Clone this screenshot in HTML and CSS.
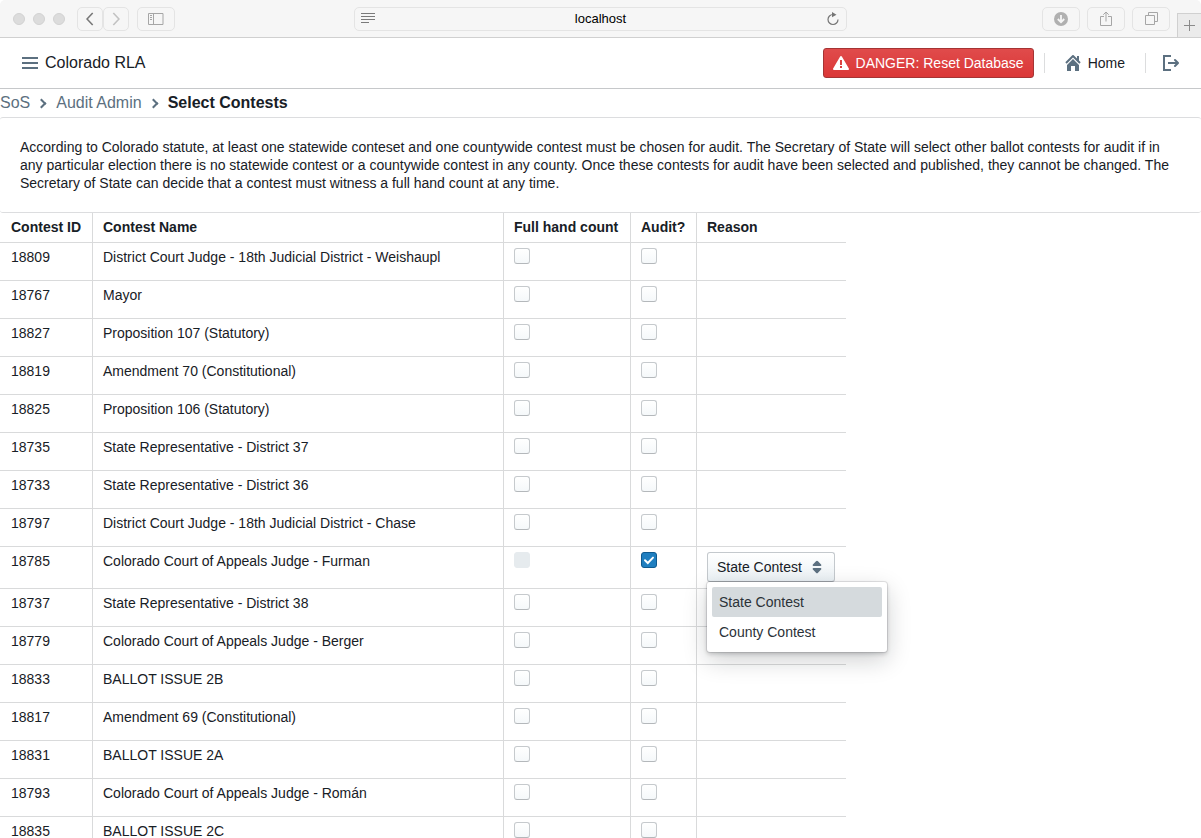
FILE: index.html
```html
<!DOCTYPE html>
<html lang="en">
<head>
<meta charset="utf-8">
<title>Colorado RLA</title>
<link rel="stylesheet" href="styles.css">
</head>
<body>
<div class="window">
  <header class="toolbar">
    <div class="toolbar-side">
      <div class="lights"><span class="light"></span><span class="light"></span><span class="light"></span></div>
      <div class="nav-pair">
        <button class="tool nav-tool" aria-label="Back"><svg width="8" height="14" viewBox="0 0 8 14"><path d="M6.700 1 1 7l5.700 6" fill="none" stroke="#777" stroke-width="1.600"/></svg></button>
        <button class="tool nav-tool" aria-label="Forward"><svg width="8" height="14" viewBox="0 0 8 14"><path d="M1.300 1 7 7l-5.700 6" fill="none" stroke="#c2c2c2" stroke-width="1.600"/></svg></button>
      </div>
      <button class="tool" aria-label="Show sidebar"><svg width="16" height="12" viewBox="0 0 16 12"><path d="M.5.500h14.500v11H.5zM5.500.500v11M2 2.500h2M2 4.500h2M2 6.500h2" fill="none" stroke="#a6a6a6"/></svg></button>
    </div>
    <div class="address">
      <svg width="14" height="11" viewBox="0 0 14 11"><path d="M0 .5h14M0 3.500h14M0 6.500h14M0 9.500h8" stroke="#7a7a7a"/></svg>
      <input class="address-input" type="text" value="localhost" aria-label="Address">
      <button class="reload" aria-label="Reload"><svg width="14" height="14" viewBox="0 0 14 14"><path d="M7 2.500A5 5 0 1 0 12 7.500" fill="none" stroke="#757575" stroke-width="1.200"/><path d="M6 0l4.500 2.700L6 5.200z" fill="#757575"/></svg></button>
    </div>
    <div class="toolbar-side toolbar-right">
      <button class="tool" aria-label="Downloads"><svg width="14" height="14" viewBox="0 0 14 14"><circle cx="7" cy="7" r="7" fill="#b0b0b0"/><path d="M7 3v7M3.800 7 7 10.300 10.200 7" fill="none" stroke="#f6f6f6" stroke-width="1.800"/></svg></button>
      <button class="tool" aria-label="Share"><svg width="12" height="16" viewBox="0 0 12 16"><path d="M4 5.500H.5v9h11v-9H8M6 10.500V1M3.300 3.700 6 1l2.700 2.700" fill="none" stroke="#a6a6a6"/></svg></button>
      <button class="tool" aria-label="Show all tabs"><svg width="13" height="13" viewBox="0 0 13 13"><path d="M.5 3.500h9v9h-9zM3.500 3.500v-3h9v9h-3" fill="none" stroke="#a6a6a6"/></svg></button>
      <button class="new-tab" aria-label="New tab"><svg width="11" height="11" viewBox="0 0 11 11"><path d="M5.500 0v11M0 5.500h11" stroke="#8a8a8a"/></svg></button>
    </div>
  </header>

  <div class="page">
    <nav class="navbar">
      <button class="brand"><svg width="16" height="16" viewBox="0 0 16 16"><path d="M0 3h16M0 8h16M0 13h16" stroke="#5c7080" stroke-width="2"/></svg>Colorado RLA</button>
      <div class="nav-actions">
        <button class="danger"><svg width="16" height="16" viewBox="0 0 16 16"><path fill="#fff" d="M15.840 13.500l.010-.010-7-12-.010.010c-.170-.300-.480-.500-.850-.500s-.670.200-.850.500l-.010-.010-7 12 .010.010c-.090.150-.150.310-.150.500 0 .550.450 1 1 1h14c.550 0 1-.450 1-1 0-.190-.060-.350-.150-.500zm-6.850-.510h-2v-2h2v2zm0-3h-2v-5h2v5z"/></svg>DANGER: Reset Database</button>
        <span class="divider"></span>
        <a class="nav-link" href="#"><svg width="16" height="16" viewBox="0 0 16 16"><path fill="#5c7080" d="M2 10v6h4v-5h4v5h4v-6L8 4zM15.700 7.300 14 5.600V1h-2v2.600L8.700.3a1 1 0 0 0-1.400 0l-7 7 1.400 1.400L8 2.400l6.300 6.300z"/></svg>Home</a>
        <span class="divider"></span>
        <button class="logout" aria-label="Log out"><svg width="16" height="16" viewBox="0 0 16 16"><path fill="#5c7080" d="M8 14H2V2h6V0H0v16h8zM15.710 7.290l-3-3a1 1 0 0 0-1.420 1.420L12.590 7H5v2h7.590l-1.300 1.290a1 1 0 0 0 1.420 1.420l3-3a1 1 0 0 0 0-1.420z"/></svg></button>
      </div>
    </nav>

    <ol class="crumbs">
      <li><a href="#">SoS</a></li>
      <li><a href="#">Audit Admin</a></li>
      <li class="current">Select Contests</li>
    </ol>

    <section class="card">According to Colorado statute, at least one statewide conteset and one countywide contest must be chosen for audit. The Secretary of State will select other ballot contests for audit if in any particular election there is no statewide contest or a countywide contest in any county. Once these contests for audit have been selected and published, they cannot be changed. The Secretary of State can decide that a contest must witness a full hand count at any time.</section>

    <table class="contests">
      <thead>
        <tr><th class="col-id">Contest ID</th><th class="col-name">Contest Name</th><th class="col-count">Full hand count</th><th class="col-audit">Audit?</th><th class="col-reason">Reason</th></tr>
      </thead>
      <tbody>
        <tr><td>18809</td><td>District Court Judge - 18th Judicial District - Weishaupl</td><td><input type="checkbox" aria-label="Full hand count 18809"></td><td><input type="checkbox" aria-label="Audit 18809"></td><td></td></tr>
        <tr><td>18767</td><td>Mayor</td><td><input type="checkbox" aria-label="Full hand count 18767"></td><td><input type="checkbox" aria-label="Audit 18767"></td><td></td></tr>
        <tr><td>18827</td><td>Proposition 107 (Statutory)</td><td><input type="checkbox" aria-label="Full hand count 18827"></td><td><input type="checkbox" aria-label="Audit 18827"></td><td></td></tr>
        <tr><td>18819</td><td>Amendment 70 (Constitutional)</td><td><input type="checkbox" aria-label="Full hand count 18819"></td><td><input type="checkbox" aria-label="Audit 18819"></td><td></td></tr>
        <tr><td>18825</td><td>Proposition 106 (Statutory)</td><td><input type="checkbox" aria-label="Full hand count 18825"></td><td><input type="checkbox" aria-label="Audit 18825"></td><td></td></tr>
        <tr><td>18735</td><td>State Representative - District 37</td><td><input type="checkbox" aria-label="Full hand count 18735"></td><td><input type="checkbox" aria-label="Audit 18735"></td><td></td></tr>
        <tr><td>18733</td><td>State Representative - District 36</td><td><input type="checkbox" aria-label="Full hand count 18733"></td><td><input type="checkbox" aria-label="Audit 18733"></td><td></td></tr>
        <tr><td>18797</td><td>District Court Judge - 18th Judicial District - Chase</td><td><input type="checkbox" aria-label="Full hand count 18797"></td><td><input type="checkbox" aria-label="Audit 18797"></td><td></td></tr>
        <tr><td>18785</td><td>Colorado Court of Appeals Judge - Furman</td><td><input type="checkbox" aria-label="Full hand count 18785" disabled></td><td><input type="checkbox" aria-label="Audit 18785" checked></td><td>
          <div class="reason">
            <select class="reason-select" aria-label="Reason 18785"><option selected>State Contest</option><option>County Contest</option></select>
            <svg class="caret" width="16" height="16" viewBox="0 0 16 16"><path fill="#5c7080" d="M4.500 7h7a.8.8 0 0 0 .6-1.400L9 2.300a1.400 1.400 0 0 0-2 0L3.900 5.600A.8.8 0 0 0 4.500 7zm7 2h-7a.8.8 0 0 0-.6 1.400L7 13.700a1.400 1.400 0 0 0 2 0l3.100-3.300A.8.8 0 0 0 11.500 9z"/></svg>
            <div class="menu">
              <button class="menu-item active">State Contest</button>
              <button class="menu-item">County Contest</button>
            </div>
          </div></td></tr>
        <tr><td>18737</td><td>State Representative - District 38</td><td><input type="checkbox" aria-label="Full hand count 18737"></td><td><input type="checkbox" aria-label="Audit 18737"></td><td></td></tr>
        <tr><td>18779</td><td>Colorado Court of Appeals Judge - Berger</td><td><input type="checkbox" aria-label="Full hand count 18779"></td><td><input type="checkbox" aria-label="Audit 18779"></td><td></td></tr>
        <tr><td>18833</td><td>BALLOT ISSUE 2B</td><td><input type="checkbox" aria-label="Full hand count 18833"></td><td><input type="checkbox" aria-label="Audit 18833"></td><td></td></tr>
        <tr><td>18817</td><td>Amendment 69 (Constitutional)</td><td><input type="checkbox" aria-label="Full hand count 18817"></td><td><input type="checkbox" aria-label="Audit 18817"></td><td></td></tr>
        <tr><td>18831</td><td>BALLOT ISSUE 2A</td><td><input type="checkbox" aria-label="Full hand count 18831"></td><td><input type="checkbox" aria-label="Audit 18831"></td><td></td></tr>
        <tr><td>18793</td><td>Colorado Court of Appeals Judge - Román</td><td><input type="checkbox" aria-label="Full hand count 18793"></td><td><input type="checkbox" aria-label="Audit 18793"></td><td></td></tr>
        <tr><td>18835</td><td>BALLOT ISSUE 2C</td><td><input type="checkbox" aria-label="Full hand count 18835"></td><td><input type="checkbox" aria-label="Audit 18835"></td><td></td></tr>
      </tbody>
    </table>
  </div>
</div>
</body>
</html>
```

FILE: styles.css
```css
*, *::before { box-sizing: border-box; }

body {
  margin: 0;
  background: #fff;
  color: #182026;
  font: 14px/18px "Liberation Sans", Arial, sans-serif;
}

button, input, select { font: inherit; color: inherit; margin: 0; }
button { border: 0; padding: 0; background: none; }
a { text-decoration: none; color: inherit; }
svg { display: block; flex: none; }

.window { display: flex; flex-direction: column; height: 100vh; overflow: hidden; }

/* Browser toolbar */
.toolbar {
  display: flex;
  align-items: center;
  flex: none;
  height: 38px;
  background: #f6f6f6;
  border-bottom: 1px solid #d0d0d0;
  border-radius: 5px 5px 0 0;
}
.toolbar-side { display: flex; align-items: center; flex: 1; gap: 8px; height: 100%; }
.toolbar-right { justify-content: flex-end; gap: 7px; }
.lights { display: flex; gap: 8px; padding: 0 4px 0 13px; }
.light { width: 12px; height: 12px; border-radius: 50%; background: #dcdcdc; border: 1px solid #d2d2d2; }
.nav-pair { display: flex; }
.tool {
  display: flex;
  align-items: center;
  justify-content: center;
  width: 38px;
  height: 24px;
  border: 1px solid #e4e4e4;
  border-radius: 5px;
}
.nav-tool { width: 26px; }
.address {
  display: flex;
  align-items: center;
  width: 41%;
  height: 24px;
  padding: 0 6px;
  border: 1px solid #e4e4e4;
  border-radius: 5px;
}
.address-input {
  flex: 1;
  min-width: 0;
  border: 0;
  padding: 0;
  background: none;
  color: #000;
  font-size: 13px;
  text-align: center;
}
.new-tab {
  display: flex;
  align-items: center;
  justify-content: center;
  align-self: flex-end;
  width: 24px;
  height: 24px;
  background: #ebebeb;
  border: 1px solid #d0d0d0;
  border-width: 1px 0 0 1px;
}

/* Application bar */
.page { flex: 1; min-height: 0; overflow: hidden; }
.navbar {
  display: flex;
  align-items: center;
  justify-content: space-between;
  height: 51px;
  padding: 0 22px;
  border-bottom: 1px solid #c6c8ca;
}
.brand { display: flex; align-items: center; gap: 7px; font-size: 16px; }
.nav-actions { display: flex; align-items: center; gap: 10px; }
.danger {
  display: flex;
  align-items: center;
  gap: 7px;
  height: 30px;
  padding: 0 9px;
  color: #fff;
  background: linear-gradient(#e04b4b, #db3737);
  border: 1px solid #a53434;
  border-radius: 3px;
}
.divider { width: 1px; height: 20px; background: #dcddde; }
.nav-link { display: flex; align-items: center; gap: 7px; padding: 0 10px; }
.logout { padding: 0 0 0 7px; }

/* Breadcrumbs */
.crumbs {
  display: flex;
  align-items: center;
  height: 28px;
  margin: 0;
  padding: 0;
  list-style: none;
  font-size: 16px;
}
.crumbs li { display: flex; align-items: center; color: #5c7080; }
.crumbs li + li::before {
  content: "";
  width: 7px;
  height: 7px;
  margin: 0 11px 0 8px;
  border: 2px solid #5c7080;
  border-width: 2px 2px 0 0;
  transform: rotate(45deg);
}
.crumbs .current { color: #182026; font-weight: 700; }

.card { padding: 20px; border: 1px solid #dcdddf; border-width: 1px 0; border-radius: 3px; }

/* Contest table */
.contests { border-collapse: separate; border-spacing: 0; table-layout: fixed; width: 846px; }
.contests th { height: 29px; padding: 5px 10px 6px; text-align: left; }
.contests td { height: 38px; padding: 5px 10px 6px; vertical-align: top; border-top: 1px solid #d9dadb; }
.contests th + th, .contests td + td { border-left: 1px solid #d9dadb; }
.contests th:first-child, .contests td:first-child { padding-left: 11px; }
.col-id { width: 92px; }
.col-name { width: 411px; }
.col-count { width: 127px; }
.col-audit { width: 66px; }

input[type="checkbox"] {
  appearance: none;
  display: block;
  width: 16px;
  height: 16px;
  border: 1px solid #c6cacd;
  border-bottom-color: #b4b8bb;
  border-radius: 3px;
  background: linear-gradient(#fff, #f5f8fa);
}
input[type="checkbox"]:disabled { background: #e6ebee; border-color: #e6ebee; }
input[type="checkbox"]:checked {
  border-color: #0f5a8f;
  background: url("data:image/svg+xml,%3Csvg xmlns='http://www.w3.org/2000/svg' viewBox='0 0 14 14'%3E%3Cpath d='M3 7.300l2.800 2.700L11 4.600' fill='none' stroke='white' stroke-width='2' stroke-linecap='round'/%3E%3C/svg%3E"), #1f7fc0;
}

/* Reason picker */
.reason { position: relative; width: 128px; }
.reason-select {
  appearance: none;
  display: block;
  width: 100%;
  height: 30px;
  padding: 0 9px;
  border: 1px solid #c4c9cd;
  border-bottom-color: #a9afb4;
  border-radius: 3px;
  background: linear-gradient(#fff, #ebf1f5);
}
.caret { position: absolute; top: 7px; right: 10px; pointer-events: none; }
.menu {
  position: absolute;
  top: 30px;
  left: 0;
  z-index: 1;
  display: flex;
  flex-direction: column;
  width: 180px;
  padding: 5px;
  color: #2b3238;
  background: #fff;
  border-radius: 3px;
  box-shadow: 0 0 0 1px rgba(16, 22, 26, .1), 0 2px 4px rgba(16, 22, 26, .2), 0 8px 24px rgba(16, 22, 26, .2);
}
.menu-item { height: 30px; padding: 0 7px; text-align: left; border-radius: 2px; }
.menu-item.active { background: #d5dadd; }
```
